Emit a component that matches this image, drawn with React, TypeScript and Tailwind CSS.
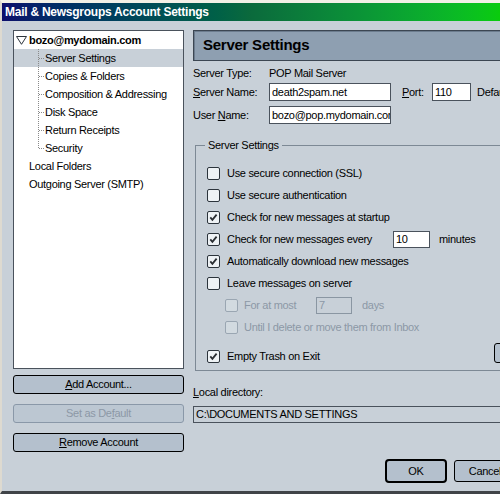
import React from "react";

function Cb({ checked = false, disabled = false }: { checked?: boolean; disabled?: boolean }) {
  return (
    <span
      className={
        disabled
          ? "w-[13px] h-[13px] rounded-[2px] border border-[#9aa6b2] bg-[#d2dae0] flex items-center justify-center shrink-0"
          : "w-[13px] h-[13px] rounded-[2px] border border-[#2c343c] bg-[#eef2f5] flex items-center justify-center shrink-0"
      }
    >
      {checked && (
        <svg width="11" height="11" viewBox="0 0 11 11">
          <path d="M2.3 5.4 L4.4 7.8 L8.6 2.6" fill="none" stroke="#2a2e33" strokeWidth="1.8" />
        </svg>
      )}
    </span>
  );
}

function Conn({ last = false }: { last?: boolean }) {
  return (
    <svg width="7" height="18" viewBox="0 0 7 18" className="shrink-0">
      <line x1="0.5" y1="0" x2="0.5" y2={last ? 9 : 18} stroke="#8a8a8a" strokeDasharray="1 1" />
      <line x1="1" y1="9.5" x2="7" y2="9.5" stroke="#8a8a8a" strokeDasharray="1 1" />
    </svg>
  );
}

export default function App() {
  const children = [
    "Server Settings",
    "Copies & Folders",
    "Composition & Addressing",
    "Disk Space",
    "Return Receipts",
    "Security",
  ];
  return (
    <div className="w-[500px] h-[494px] overflow-hidden bg-[#c8d0d8] flex flex-col border-l-[2px] border-l-[#dedad0] border-t-[3px] border-t-[#f2f0e6] border-b-[3px] border-b-[#404448] font-['Liberation_Sans',Arial,sans-serif] text-[11px] tracking-[-0.3px] text-black">
      {/* Title bar */}
      <div className="h-[18px] shrink-0 flex items-center pl-[3px] bg-linear-to-r from-[#0e0e6c] via-[#0b6a3c] to-[#0acc0c]">
        <span className="text-white font-bold text-[12px] tracking-[-0.25px] whitespace-nowrap">
          Mail &amp; Newsgroups Account Settings
        </span>
      </div>

      {/* Content */}
      <div className="flex pl-[11px] pt-[9px]">
        {/* Left column */}
        <div className="w-[171px] shrink-0 flex flex-col">
          <div className="h-[339px] border border-[#4a525c] bg-white flex flex-col">
            <div className="h-[18px] flex items-center pl-[2px] gap-[2px]">
              <svg width="11" height="9" viewBox="0 0 11 9" className="shrink-0">
                <path d="M0.5 0.5 H10.5 L5.5 8.3 Z" fill="white" stroke="#2c343c" strokeWidth="1" />
              </svg>
              <span className="font-bold">bozo@mydomain.com</span>
            </div>
            {children.map((c, i) => (
              <div
                key={c}
                className={
                  i === 0
                    ? "h-[18px] flex items-center pl-[24px] bg-[#c8d0d8]"
                    : "h-[18px] flex items-center pl-[24px]"
                }
              >
                <Conn last={i === children.length - 1} />
                <span className="whitespace-nowrap">{c}</span>
              </div>
            ))}
            <div className="h-[18px] flex items-center pl-[15px]">Local Folders</div>
            <div className="h-[18px] flex items-center pl-[15px]">Outgoing Server (SMTP)</div>
          </div>
          <button className="mt-[6px] h-[19px] rounded-[3px] border border-black bg-[#b4c0cd] flex items-center justify-center">
            <span>
              <span className="underline">A</span>dd Account...
            </span>
          </button>
          <button className="mt-[10px] h-[19px] rounded-[3px] border border-[#8a98a8] bg-[#bcc7d2] flex items-center justify-center text-[#8c98a6]">
            <span>
              Set as De<span className="underline">f</span>ault
            </span>
          </button>
          <button className="mt-[10px] h-[19px] rounded-[3px] border border-black bg-[#b4c0cd] flex items-center justify-center">
            <span>
              <span className="underline">R</span>emove Account
            </span>
          </button>
        </div>

        {/* Right column */}
        <div className="ml-[9px] w-[420px] shrink-0 flex flex-col">
          <div className="h-[31px] border border-[#3c4652] bg-[#8e9fb1] flex items-center pl-[9px] shadow-[inset_1px_1px_0_#6c7c8e]">
            <span className="font-bold text-[15px] tracking-[-0.25px]">Server Settings</span>
          </div>

          <div className="mt-[3px] h-[18px] flex items-center">
            <span className="w-[76px] shrink-0">Server Type:</span>
            <span>POP Mail Server</span>
          </div>

          <div className="mt-[1px] h-[18px] flex items-center">
            <span className="w-[76px] shrink-0">
              <span className="underline">S</span>erver Name:
            </span>
            <div className="w-[122px] h-[18px] border border-[#4a525c] bg-white px-[2px] flex items-center whitespace-nowrap overflow-hidden">
              death2spam.net
            </div>
            <span className="ml-[11px] w-[30px] shrink-0">
              <span className="underline">P</span>ort:
            </span>
            <div className="w-[39px] h-[18px] border border-[#4a525c] bg-white px-[2px] flex items-center">110</div>
            <span className="ml-[6px] whitespace-nowrap">Default: 110</span>
          </div>

          <div className="mt-[5px] h-[18px] flex items-center">
            <span className="w-[76px] shrink-0">
              User <span className="underline">N</span>ame:
            </span>
            <div className="w-[122px] h-[18px] border border-[#4a525c] bg-white px-[2px] flex items-center whitespace-nowrap overflow-hidden">
              bozo@pop.mydomain.com
            </div>
          </div>

          {/* Group box */}
          <div className="relative ml-[2px] mt-[21px] w-[400px] border border-[#7d8995] pt-[16px] pb-[3px] pl-[11px] flex flex-col">
            <span className="absolute top-[-8px] left-[9px] px-[3px] leading-[15px] bg-[#c8d0d8]">Server Settings</span>
            <div className="h-[22px] flex items-center">
              <Cb />
              <span className="ml-[7px]">Use secure connection (SSL)</span>
            </div>
            <div className="h-[22px] flex items-center">
              <Cb />
              <span className="ml-[7px]">Use secure authentication</span>
            </div>
            <div className="h-[22px] flex items-center">
              <Cb checked />
              <span className="ml-[7px]">Check for new messages at startup</span>
            </div>
            <div className="h-[22px] flex items-center">
              <Cb checked />
              <span className="ml-[7px] w-[166px] shrink-0 whitespace-nowrap">Check for new messages every</span>
              <div className="w-[37px] h-[17px] border border-[#4a525c] bg-white px-[2px] flex items-center">10</div>
              <span className="ml-[9px]">minutes</span>
            </div>
            <div className="h-[22px] flex items-center">
              <Cb checked />
              <span className="ml-[7px]">Automatically download new messages</span>
            </div>
            <div className="h-[22px] flex items-center">
              <Cb />
              <span className="ml-[7px]">Leave messages on server</span>
            </div>
            <div className="h-[22px] flex items-center pl-[18px] text-[#8c98a6]">
              <Cb disabled />
              <span className="ml-[6px] w-[72px] shrink-0">For at most</span>
              <div className="w-[36px] h-[17px] border border-[#8a96a2] bg-[#c8d0d8] px-[2px] flex items-center">7</div>
              <span className="ml-[10px]">days</span>
            </div>
            <div className="h-[22px] flex items-center pl-[18px] text-[#8c98a6]">
              <Cb disabled />
              <span className="ml-[6px] whitespace-nowrap">Until I delete or move them from Inbox</span>
            </div>
            <div className="mt-[7px] h-[22px] flex items-center">
              <Cb checked />
              <span className="ml-[7px]">Empty Trash on Exit</span>
              <button className="ml-auto mr-[20px] w-[80px] h-[20px] -mt-[6px] rounded-[3px] border border-black bg-[#b4c0cd] flex items-center justify-center">
                Advanced...
              </button>
            </div>
          </div>

          <div className="mt-[14px] h-[14px] flex items-center">
            <span>
              <span className="underline">L</span>ocal directory:
            </span>
          </div>
          <div className="mt-[7px] w-[400px] h-[17px] border border-[#4a525c] bg-[#c8d0d8] px-[2px] flex items-center whitespace-nowrap">
            C:\DOCUMENTS AND SETTINGS
          </div>

          <div className="mt-[36px] flex items-start pl-[192px] gap-[7px]">
            <button className="w-[62px] h-[24px] rounded-[4px] border-2 border-black bg-[#b4c0cd] flex items-center justify-center">
              OK
            </button>
            <button className="mt-[1px] w-[62px] h-[22px] rounded-[3px] border border-black bg-[#b4c0cd] flex items-center justify-center">
              Cancel
            </button>
          </div>
        </div>
      </div>
    </div>
  );
}
